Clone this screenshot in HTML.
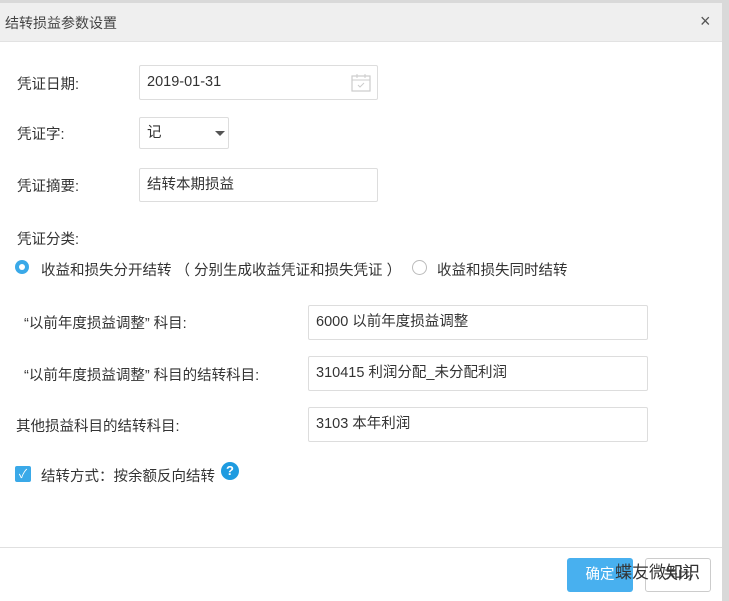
<!DOCTYPE html>
<html><head><meta charset="utf-8"><style>
body{margin:0;width:729px;height:601px;overflow:hidden;background:#d9d9d9;font-family:"Liberation Sans","Noto Sans CJK SC",sans-serif;font-size:14.5px;color:#333;position:relative}
.dlg{position:absolute;left:0;top:3px;width:722px;height:598px;background:#fff}
.hd{position:absolute;left:0;top:0;width:722px;height:38px;background:#efefef;border-bottom:1px solid #e2e2e2}
.a{position:absolute;white-space:nowrap}
.in{position:absolute;border:1px solid #ddd;border-radius:2px;background:#fff;box-sizing:border-box;padding-left:7px;font-size:14.5px}
</style></head><body>
<div class="dlg">
<div class="hd"><div class="a" style="left:5px;top:10px;font-size:14px;color:#444">结转损益参数设置</div><div class="a" style="left:700px;top:8px;font-size:18px;color:#555">×</div></div>
<div class="a" style="left:17px;top:70px">凭证日期:</div>
<div class="in" style="left:139px;top:62px;width:239px;height:35px;line-height:33px">2019-01-31
<svg style="position:absolute;right:5px;top:7px" width="22" height="20" viewBox="0 0 22 20"><rect x="2" y="3" width="18" height="15" fill="none" stroke="#ccc" stroke-width="1.2"/><line x1="2" y1="7" x2="20" y2="7" stroke="#ccc"/><line x1="7" y1="1" x2="7" y2="5" stroke="#ccc"/><line x1="15" y1="1" x2="15" y2="5" stroke="#ccc"/><path d="M8 12l2 2 4-4" fill="none" stroke="#ccc"/></svg></div>
<div class="a" style="left:17px;top:120px">凭证字:</div>
<div class="in" style="left:139px;top:114px;width:90px;height:32px;line-height:30px">记<span style="position:absolute;left:75px;top:13px;border:5px solid transparent;border-top:5px solid #555;border-bottom:0"></span></div>
<div class="a" style="left:17px;top:172px">凭证摘要:</div>
<div class="in" style="left:139px;top:165px;width:239px;height:34px;line-height:32px">结转本期损益</div>
<div class="a" style="left:17px;top:225px">凭证分类:</div>
<div class="a" style="left:15px;top:257px;width:14px;height:14px;border-radius:50%;background:#3aa9e8"><div style="position:absolute;left:4px;top:4px;width:6px;height:6px;border-radius:50%;background:#fff"></div></div>
<div class="a" style="left:41px;top:256px">收益和损失分开结转 （ 分别生成收益凭证和损失凭证 ）</div>
<div class="a" style="left:412px;top:257px;width:13px;height:13px;border-radius:50%;border:1px solid #bbb"></div>
<div class="a" style="left:437px;top:256px">收益和损失同时结转</div>
<div class="a" style="left:24px;top:309px">“以前年度损益调整” 科目:</div>
<div class="in" style="left:308px;top:302px;width:340px;height:35px;line-height:33px">6000 以前年度损益调整</div>
<div class="a" style="left:24px;top:361px">“以前年度损益调整” 科目的结转科目:</div>
<div class="in" style="left:308px;top:353px;width:340px;height:35px;line-height:33px">310415 利润分配_未分配利润</div>
<div class="a" style="left:16px;top:412px">其他损益科目的结转科目:</div>
<div class="in" style="left:308px;top:404px;width:340px;height:35px;line-height:33px">3103 本年利润</div>
<div class="a" style="left:15px;top:463px;width:16px;height:16px;border-radius:2px;background:#3aa9e8;color:#fff;font-size:12px;line-height:16px;text-align:center">✓</div>
<div class="a" style="left:41px;top:462px">结转方式：按余额反向结转</div>
<div class="a" style="left:221px;top:459px;width:18px;height:18px;border-radius:50%;background:#1e9be0;color:#fff;font-weight:bold;font-size:13px;line-height:18px;text-align:center">?</div>
<div class="a" style="left:0;top:544px;width:722px;height:1px;background:#e0e0e0"></div>
<div class="a" style="left:567px;top:555px;width:66px;height:34px;border-radius:3px;background:#48b0ef;color:#fff;line-height:34px;text-align:center">确定</div>
<div class="a" style="left:645px;top:555px;width:66px;height:34px;border-radius:3px;border:1px solid #ccc;box-sizing:border-box;line-height:32px;text-align:center">关闭</div>
<div class="a" style="left:615px;top:555px;font-size:17px;color:#333">蝶友微知识</div>
</div>
</body></html>
